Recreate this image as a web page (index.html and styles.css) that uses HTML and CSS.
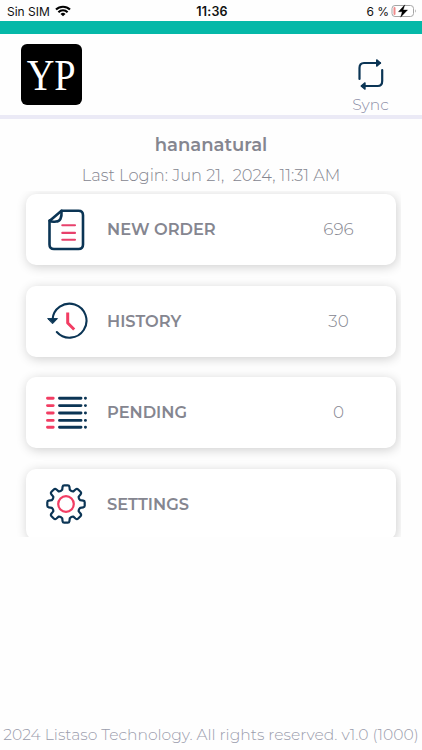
FILE: index.html
```html
<!DOCTYPE html>
<html lang="en">
<head>
    <meta charset="UTF-8">
    <meta name="viewport" content="width=device-width, initial-scale=1.0">
    <title>Listaso</title>
    <link rel="stylesheet" href="styles.css">
</head>
<body>

    <!-- Phone status bar -->
    <div class="status-bar">
        <div class="carrier">
            <span class="sim">Sin SIM</span>
            <svg width="16" height="12" viewBox="0 0 16 12" fill="none" stroke="#000" stroke-width="2.1">
                <path d="M1 4.6a10 10 0 0 1 14 0M3.4 7.2a6.5 6.5 0 0 1 9.2 0"/>
                <path d="M8 11.3L5.5 8.9a3.6 3.6 0 0 1 5 0z" fill="#000" stroke="none"/>
            </svg>
        </div>
        <div class="clock">11:36</div>
        <div class="battery">
            <span class="percent">6 %</span>
            <svg width="26" height="14" viewBox="0 0 26 14">
                <rect x="1" y="1.5" width="21.5" height="11" rx="3" fill="#fff" stroke="#a5a5a5"/>
                <rect x="2.5" y="3" width="2" height="8" rx="1" fill="#f08a8a"/>
                <path d="M24 5.2q1.6 1.8 0 3.6z" fill="#999"/>
                <path d="M13.8 .8L7.4 7.8h3.8l-1.6 5.4 7-7.3h-4.4z" fill="#000" stroke="#000" stroke-width=".3"/>
            </svg>
        </div>
    </div>
    <div class="strip"></div>

    <!-- Logo and sync button -->
    <div class="header">
        <div class="logo"><span>YP</span></div>
        <div class="sync">
            <svg width="28" height="32" viewBox="0 0 28 32" fill="none" stroke="#0b3555" stroke-width="2.2" stroke-linecap="round" stroke-linejoin="round">
                <path d="M2.500 20V9q0-5 4.500-5h16M25.200 11v11q0 5-4.500 5H5"/>
                <path d="M19.700 .900l3.800 3.100-3.800 3.100zM8 23.900l-3.800 3.100 3.800 3.100z" fill="#0b3555" stroke-width="1.400"/>
            </svg>
            <span>Sync</span>
        </div>
    </div>

    <div class="user">hananatural</div>
    <div class="last-login">Last Login: Jun 21,&nbsp; 2024, 11:31 AM</div>

    <!-- Menu -->
    <div class="menu">
        <div class="card">
            <svg class="icon" width="44" height="44" viewBox="0 0 44 44" fill="none" stroke-linecap="round" stroke-linejoin="round">
                <path d="M17.500 2.800h17q4.500 0 4.500 4.500v29.200q0 4.500-4.500 4.500h-24.500Q5.500 41 5.500 36.500V13z" stroke="#0b3555" stroke-width="2.600"/>
                <path d="M17.500 2.800q.7 10.700-5.500 10.700Q7.500 14.200 5.500 12.500" stroke="#0b3555" stroke-width="2.600"/>
                <path d="M18.300 17.300h12.700M18.300 24.900h12.700M18.300 31.800h12.700" stroke="#e8416c" stroke-width="2.100"/>
            </svg>
            <span class="label">NEW ORDER</span>
            <span class="count">696</span>
        </div>
        <div class="card">
            <svg class="icon" width="44" height="44" viewBox="0 0 44 44" fill="none" stroke-linecap="round" stroke-linejoin="round">
                <path d="M8.500 20.800A17 17 0 1 1 12.800 33" stroke="#0b3555" stroke-width="2.100"/>
                <path d="M4 19.600h9.500L8.800 24.500z" fill="#0b3555" stroke="#0b3555" stroke-width="1"/>
                <path d="M23.700 13.500v10.500l6.500 6.500" stroke="#f23d63" stroke-width="3" stroke-linecap="butt"/>
            </svg>
            <span class="label">HISTORY</span>
            <span class="count">30</span>
        </div>
        <div class="card">
            <svg class="icon" width="44" height="44" viewBox="0 0 44 44" fill="none" stroke-width="2.900" stroke-linecap="round">
                <path d="M3.500 7.200h5.700M3.500 14.600h5.700M3.500 22h5.700M3.500 29.400h5.700M3.500 36.200h5.700" stroke="#f23d63"/>
                <path d="M15.500 7.200h21.500M15.500 14.600h21.500M15.500 22h21.500M15.500 29.400h21.500M15.500 36.200h21.500M41.400 7.200h.1M41.400 14.600h.1M41.400 22h.1M41.400 29.400h.1M41.400 36.200h.1" stroke="#0b3555"/>
            </svg>
            <span class="label">PENDING</span>
            <span class="count">0</span>
        </div>
        <div class="card">
            <svg class="icon" width="44" height="44" viewBox="-22 -22 44 44" fill="none" stroke-width="2.200" stroke-linejoin="round">
                <path d="M-3.800-14.200L-3.400-17.300Q-3.200-18.700-1.800-18.700H1.800Q3.200-18.700 3.400-17.300L3.800-14.200Q5.500-12.400 7.400-12.700L9.500-14.500Q11-15.700 12.200-14.500L14.500-12.200Q15.700-11 14.500-9.500L12.700-7.400Q12.400-5.500 14.200-3.800L17.300-3.400Q18.700-3.200 18.700-1.800V1.800Q18.700 3.200 17.300 3.400L14.200 3.800Q12.400 5.500 12.700 7.400L14.500 9.500Q15.700 11 14.500 12.200L12.200 14.500Q11 15.700 9.500 14.500L7.400 12.700Q5.500 12.400 3.800 14.200L3.400 17.300Q3.200 18.700 1.800 18.700H-1.800Q-3.200 18.700-3.400 17.300L-3.800 14.200Q-5.500 12.400-7.400 12.700L-9.500 14.500Q-11 15.700-12.200 14.500L-14.500 12.200Q-15.700 11-14.500 9.500L-12.700 7.400Q-12.400 5.500-14.200 3.800L-17.300 3.400Q-18.700 3.200-18.700 1.800V-1.800Q-18.700-3.200-17.300-3.400L-14.200-3.800Q-12.400-5.500-12.700-7.400L-14.500-9.500Q-15.700-11-14.500-12.200L-12.200-14.500Q-11-15.700-9.500-14.500L-7.400-12.700Q-5.500-12.400-3.800-14.200z" stroke="#0b3555"/>
                <circle r="7.800" stroke="#f23d63"/>
            </svg>
            <span class="label">SETTINGS</span>
        </div>
    </div>

    <div class="footer">2024 Listaso Technology. All rights reserved. v1.0 (1000)</div>

</body>
</html>
```

FILE: styles.css
```css
* {
    box-sizing: border-box;
}
body {
    margin: 0;
    height: 750px;
    display: flex;
    flex-direction: column;
    overflow: hidden;
    background-color: #fefefe;
    font-family: Montserrat, Inter, sans-serif;
    color: #858690;
    white-space: nowrap;
}
.status-bar {
    display: grid;
    grid-template-columns: 1fr auto 1fr;
    align-items: center;
    height: 21px;
    padding: 1px 5px 0 7px;
    font-family: Inter, sans-serif;
    font-size: 12px;
    color: #111;
}
.carrier,
.battery {
    display: flex;
    align-items: center;
    gap: 5px;
}
.battery {
    justify-content: flex-end;
    gap: 2px;
}
.clock {
    font-size: 12.5px;
    font-weight: 600;
    letter-spacing: 0.2px;
}
.strip {
    height: 13px;
    background-color: #05b8a8;
}
.header {
    display: flex;
    justify-content: space-between;
    height: 85px;
    padding: 10px 32px 0 21px;
    border-bottom: 4px solid #ebeaf6;
}
.logo {
    display: flex;
    justify-content: center;
    width: 61px;
    height: 61px;
    border-radius: 6px;
    background-color: #000;
    color: #fff;
    font-family: "Liberation Serif", serif;
    font-size: 44px;
    line-height: 63px;
}
.logo span {
    font-kerning: none;
    transform: scaleX(0.87);
}
.sync {
    display: flex;
    flex-direction: column;
    align-items: center;
    width: 39px;
    padding-top: 15px;
    font-size: 15.5px;
    font-weight: 300;
    line-height: 20px;
    color: #8d8fa8;
}
.sync span {
    margin-top: 4px;
}
.user {
    margin-top: 15px;
    font-size: 18px;
    font-weight: 600;
    line-height: 23px;
    text-align: center;
}
.last-login {
    margin-top: 8px;
    font-size: 16.25px;
    font-weight: 300;
    line-height: 20px;
    text-align: center;
}
.menu {
    display: flex;
    flex-direction: column;
    gap: 20.5px;
    width: 391px;
    height: 346px;
    margin: 6px 0 0 10px;
    padding: 3px 5px 0 16px;
    overflow: hidden;
}
.card {
    display: flex;
    flex-shrink: 0;
    align-items: center;
    height: 71px;
    padding: 0 27px 0 18px;
    border-radius: 10px;
    background-color: #fff;
    box-shadow: 1px 2px 11px rgba(0, 0, 0, 0.19);
}
.label {
    flex: 1;
    margin-left: 19px;
    font-size: 16.25px;
    font-weight: 600;
    line-height: 21px;
}
.count {
    width: 61px;
    font-size: 16.75px;
    font-weight: 350;
    line-height: 21px;
    text-align: center;
}
.footer {
    margin-top: auto;
    height: 25px;
    font-size: 15.55px;
    font-weight: 300;
    line-height: 20px;
    color: #9a9cac;
    text-align: center;
}
```
